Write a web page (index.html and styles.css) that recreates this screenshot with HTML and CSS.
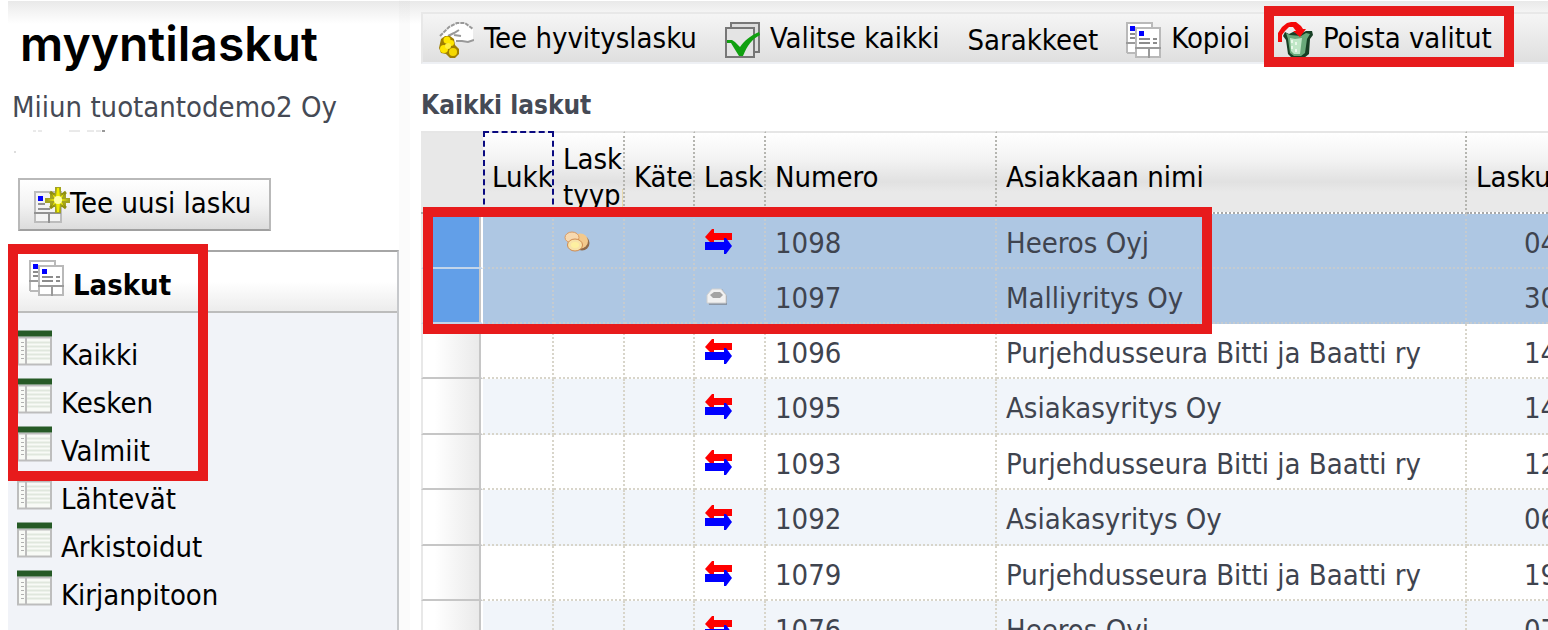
FILE: index.html
```
<!DOCTYPE html>
<html lang="fi">
<head>
  <meta charset="UTF-8">
  <meta name="viewport" content="width=device-width, initial-scale=1">
  <title>Myyntilaskut</title>
  <link rel="stylesheet" href="styles.css">
</head>
<body>

  <!-- Icon set -->
  <svg class="sprite" aria-hidden="true">
    <symbol id="i-form" viewBox="0 0 35 36">
      <path d="M1 1h25v4h-17v26H1z" fill="#fff"/>
      <path d="M1 31V1h25v4M1 31h8" fill="none" stroke="#b9b9b9" stroke-width="2"/>
      <path d="M4 12h5M4 16h5" stroke="#8c8c8c" stroke-width="2"/>
      <path d="M0 21h9" stroke="#9a9a9a" stroke-width="2"/>
      <path d="M4 4h5v5H4z" fill="#00f"/>
      <path d="M10 6h24v29H10z" fill="#fff" stroke="#b9b9b9" stroke-width="2"/>
      <path d="M9 26h26M23 26v10" stroke="#9a9a9a" stroke-width="2"/>
      <path d="M13 9h5v5h-5z" fill="#00f"/>
      <path d="M13 17h11M27 17h4M13 21h11M27 21h4" stroke="#8c8c8c" stroke-width="2"/>
    </symbol>
    <symbol id="i-new" viewBox="0 0 36 36">
      <path d="M1 5h26v30H1z" fill="#f4f4f4" stroke="#bcbcbc" stroke-width="2"/>
      <path d="M0 26h27M15 26v10" stroke="#929292" stroke-width="2"/>
      <path d="M4 9h5v5H4z" fill="#00f"/>
      <path d="M4 17h7M4 22h12" stroke="#929292" stroke-width="2"/>
      <path d="M21 0h6v6h5v5h4v5h-4v4h-5v6h-6v-6h-5v-4h-5v-5h5V6h5z" fill="#a3a320"/>
      <path d="M16 5l4 3M32 5l-4 3M16 21l4-3M32 21l-4-3" stroke="#8f8f10" stroke-width="3"/>
      <path d="M23 1h2l1 9 4-3-3 5 8 1-8 1 3 5-4-3-1 9h-2l-1-9-4 3 3-5-8-1 8-1-3-5 4 3z" fill="#f0ec00"/>
      <circle cx="24" cy="13" r="4" fill="#ffffa8"/>
    </symbol>
    <symbol id="i-list" viewBox="0 0 35 35">
      <path d="M1 7h33v27H1z" fill="#f8faf6" stroke="#bdbdbd" stroke-width="2"/>
      <path d="M10 12h23M10 16h23M10 20h23M10 24h23M10 28h23" stroke="#e0e7dd" stroke-width="2"/>
      <path d="M9 7v27" stroke="#bdbdbd" stroke-width="2"/>
      <path d="M4 12h3M4 16h3M4 20h3M4 24h3M4 28h3" stroke="#b0b0b0" stroke-width="1"/>
      <path d="M0 0h35v6H0z" fill="#265a26"/>
    </symbol>
    <symbol id="i-hand" viewBox="0 0 35 36">
      <path d="M2 14L10 5l8-4h9l7 5v12l-6 1-12 1-9-3z" fill="#fff"/>
      <path d="M1 14L10 5l8-4h8l4 3 4 3" fill="none" stroke="#999" stroke-width="2" stroke-dasharray="4 1"/>
      <path d="M9 14l6-3 5-3M15 13l7 1M17 19h6l6 1 6-2" fill="none" stroke="#999" stroke-width="2"/>
      <path d="M2 17l4-3h5l4 3 1 6 4 4v5l-4 4h-5l-4-4-5-1-2-5z" fill="#a08000"/>
      <circle cx="8" cy="18" r="3.500" fill="#ffe600"/>
      <circle cx="12" cy="21" r="3" fill="#ffe600"/>
      <circle cx="5" cy="27" r="4" fill="#ffe600"/>
      <circle cx="9" cy="24" r="3" fill="#fff040"/>
      <circle cx="14" cy="30" r="4" fill="#f5d800"/>
    </symbol>
    <symbol id="i-check" viewBox="0 0 35 36">
      <path d="M6 1h28v29H6z" fill="#ddd" stroke="#777" stroke-width="2"/>
      <path d="M1 6h28v29H1z" fill="#e4e4e4" stroke="#777" stroke-width="2"/>
      <path d="M2 18h5l3 2 5 5c5-7 10-11 19-15l1 3c-8 4-13 11-17 21h-4L9 26l-3-5H2z" fill="#10a010"/>
    </symbol>
    <symbol id="i-trash" viewBox="0 0 35 36">
      <path d="M7 10l4 2 4-2 9 1 4-2h6l1 4-3 4-1 15-5 4H14l-4-4-2-14-3-4z" fill="#173f24"/>
      <path d="M8 11l4 2 11 1 5-3 4 1-3 5-2 14-4 3h-7l-4-3-2-14z" fill="#69a97a"/>
      <path d="M12 16l5 1 7-1-2 16h-6l-3-3z" fill="#bfe6c6"/>
      <path d="M14 18v3M14 24v3M18 20v3M18 27v3" stroke="#e9f8ea" stroke-width="2"/>
      <path d="M0 20v-9l4-6 5-4 4-1h5l5 4 2 3h3l-6 8-7-6h3l-3-4h-4L7 9l-3 4v7z" fill="#f40909"/>
    </symbol>
    <symbol id="i-arrows" viewBox="0 0 28 26">
      <path d="M0 8l7-8h2v4h18v7H9v4H7z" fill="#f00"/>
      <path d="M0 13h19V9h2l6 8-6 8h-2v-4H0z" fill="#00f"/>
    </symbol>
    <symbol id="i-coins" viewBox="0 0 26 21">
      <ellipse cx="18" cy="12" rx="7.500" ry="7.500" fill="#8f6a4a"/>
      <ellipse cx="16.500" cy="10" rx="7.500" ry="7.500" fill="#f3c98c"/>
      <ellipse cx="8" cy="6.500" rx="7" ry="5.500" fill="#f7d9b0" stroke="#d99a63"/>
      <ellipse cx="11" cy="14" rx="7.500" ry="6" fill="#f8e3a8" stroke="#d08a50"/>
      <ellipse cx="11" cy="14" rx="4" ry="3" fill="#fdf0a0"/>
    </symbol>
    <symbol id="i-letter" viewBox="0 0 22 18">
      <path d="M2 8l5-6 9-1 5 7v9H3z" fill="#8b97a6"/>
      <path d="M1 7l5-6h9l5 6v8H1z" fill="#f1f1f1" stroke="#cfcfcf"/>
      <path d="M4 7l4-3h6l3 3-3 3H7z" fill="#a3a3a3"/>
    </symbol>
  </svg>

  <div class="app">

    <!-- Sidebar -->
    <aside class="sidebar">
      <h1 class="title">myyntilaskut</h1>
      <p class="company">Miiun tuotantodemo2 Oy</p>
      <svg class="remains" width="110" height="24" aria-hidden="true">
        <path d="M20 1h3M25 1h4M56 1h11M74 1h7M83 1h5" stroke="#d4d4d4"/>
        <path d="M89 1h3" stroke="#333"/>
        <path d="M1 22h2" stroke="#bbb"/>
      </svg>
      <button class="new-invoice" type="button">
        <svg class="icon"><use href="#i-new"/></svg>
        <span>Tee uusi lasku</span>
      </button>

      <nav class="menu">
        <h2 class="menu-head">
          <svg class="icon"><use href="#i-form"/></svg>
          <span>Laskut</span>
        </h2>
        <ul class="menu-list">
          <li><a href="#"><svg class="icon"><use href="#i-list"/></svg><span>Kaikki</span></a></li>
          <li><a href="#"><svg class="icon"><use href="#i-list"/></svg><span>Kesken</span></a></li>
          <li><a href="#"><svg class="icon"><use href="#i-list"/></svg><span>Valmiit</span></a></li>
          <li><a href="#"><svg class="icon"><use href="#i-list"/></svg><span>Lähtevät</span></a></li>
          <li><a href="#"><svg class="icon"><use href="#i-list"/></svg><span>Arkistoidut</span></a></li>
          <li><a href="#"><svg class="icon"><use href="#i-list"/></svg><span>Kirjanpitoon</span></a></li>
        </ul>
        <div class="marker marker-menu"></div>
      </nav>
    </aside>

    <!-- Invoices -->
    <main class="main">
      <div class="toolbar">
        <button type="button"><svg class="icon"><use href="#i-hand"/></svg>Tee hyvityslasku</button>
        <button type="button"><svg class="icon"><use href="#i-check"/></svg>Valitse kaikki</button>
        <button type="button" class="text-only">Sarakkeet</button>
        <button type="button"><svg class="icon"><use href="#i-form"/></svg>Kopioi</button>
        <button type="button"><svg class="icon"><use href="#i-trash"/></svg>Poista valitut<span class="marker marker-delete"></span></button>
      </div>

      <h2 class="heading">Kaikki laskut</h2>

      <div class="grid">
        <table class="invoices">
          <colgroup>
            <col class="c-row"><col class="c-small"><col class="c-small"><col class="c-cash"><col class="c-small"><col class="c-number"><col><col class="c-date">
          </colgroup>
          <thead>
            <tr>
              <th class="row-head"></th>
              <th class="focused"><div class="label">Lukk</div></th>
              <th><div class="label">Lask<br>tyyppi</div></th>
              <th><div class="label">Käte</div></th>
              <th><div class="label">Lask</div></th>
              <th><div class="label">Numero</div></th>
              <th><div class="label">Asiakkaan nimi</div></th>
              <th><div class="label">Lasku</div></th>
            </tr>
          </thead>
          <tbody id="rows"></tbody>
        </table>
        <div class="marker marker-rows"></div>
      </div>
    </main>
  </div>

  <script>
    const invoices = [
      { no: 1098, name: "Heeros Oyj", date: "04", type: "coins", send: "arrows", selected: true },
      { no: 1097, name: "Malliyritys Oy", date: "30", send: "letter", selected: true },
      { no: 1096, name: "Purjehdusseura Bitti ja Baatti ry", date: "14", send: "arrows" },
      { no: 1095, name: "Asiakasyritys Oy", date: "14", send: "arrows" },
      { no: 1093, name: "Purjehdusseura Bitti ja Baatti ry", date: "12", send: "arrows" },
      { no: 1092, name: "Asiakasyritys Oy", date: "06", send: "arrows" },
      { no: 1079, name: "Purjehdusseura Bitti ja Baatti ry", date: "19", send: "arrows" },
      { no: 1076, name: "Heeros Oyj", date: "07", send: "arrows" }
    ];

    function icon(name) {
      return name ? `<svg class="cell-icon ${name}"><use href="#i-${name}"/></svg>` : '';
    }

    document.getElementById('rows').innerHTML = invoices.map(r => `
      <tr class="${r.selected ? 'selected' : ''}">
        <td class="row-head"></td>
        <td></td>
        <td>${icon(r.type)}</td>
        <td></td>
        <td>${icon(r.send)}</td>
        <td>${r.no}</td>
        <td>${r.name}</td>
        <td class="date">${r.date}</td>
      </tr>`).join('');
  </script>
</body>
</html>
```
FILE: styles.css
```
* {
  box-sizing: border-box;
}

html,
body {
  height: 100%;
}

body {
  margin: 0;
  padding-left: 8px;
  overflow: hidden;
  background: #fff;
  color: #000;
  font-family: "DejaVu Sans Condensed", "Noto Sans", sans-serif;
  font-size: 29px;
  line-height: 36px;
}

.sprite {
  position: absolute;
  width: 0;
  height: 0;
}

.icon {
  flex: none;
  width: 35px;
  height: 36px;
}

button {
  font: inherit;
  color: inherit;
  cursor: pointer;
}

.app {
  display: grid;
  grid-template-columns: 391px minmax(0, 1fr);
  min-height: 100%;
  background: linear-gradient(#fff 1px, #e9e9e9 1px, #f4f4f4 12px, #fff 24px);
}

/* Red highlight frames */
.marker {
  position: absolute;
  border: 10px solid #e71b1c;
  pointer-events: none;
}

.marker-menu {
  left: 0;
  top: -8px;
  width: 200px;
  height: 237px;
}

.marker-delete {
  left: -14px;
  right: -22px;
  top: -14px;
  height: 61px;
}

.marker-rows {
  left: 2px;
  top: 76px;
  width: 789px;
  height: 127px;
}

/* Sidebar */
.sidebar {
  display: flex;
  flex-direction: column;
  align-items: flex-start;
  padding-top: 14px;
}

.title {
  margin: 0 0 0 12px;
  font: 600 48px/60px Inter, sans-serif;
}

.company {
  margin: 15px 0 5px 4px;
  color: #454a55;
}

.remains {
  margin-left: 5px;
}

.new-invoice {
  display: flex;
  margin: 24px 0 19px 10px;
  padding: 5px 18px 8px 14px;
  border: 2px solid #b9b9b9;
  border-bottom-color: #a0a0a0;
  background: linear-gradient(#fff, #f3f3f3 50%, #dcdcdc);
}

.new-invoice .icon {
  width: 36px;
  margin-top: 2px;
  margin-bottom: -2px;
}

.menu {
  position: relative;
  flex: 1;
  width: 100%;
  border-top: 2px solid #a6a6a6;
  border-right: 2px solid #c6c8cb;
  background: #f1f3f8;
}

.menu-head {
  display: flex;
  gap: 9px;
  height: 61px;
  margin: 0;
  padding: 8px 0 0 21px;
  border-bottom: 2px solid #bcbcbc;
  background: linear-gradient(#fff 50%, #ececec);
  font-size: 29px;
}

.menu-head span,
.menu-list span {
  padding-top: 7px;
}

.menu-list {
  margin: 0;
  padding: 17px 0 0 9px;
  list-style: none;
}

.menu-list a {
  display: flex;
  gap: 9px;
  height: 48px;
  color: #000;
  text-decoration: none;
}

/* Main area */
.main {
  padding: 12px 0 0 22px;
  overflow: hidden;
  background: linear-gradient(90deg, rgba(0,0,0,0.016) 11px, transparent 11px);
}

.toolbar {
  display: flex;
  gap: 28px;
  height: 52px;
  padding: 6px 16px;
  border: 2px solid #e8e8e8;
  border-right: none;
  border-bottom-color: #eef0f4;
  background: linear-gradient(#f5f5f5, #dfdfdf);
}

.toolbar button {
  position: relative;
  display: flex;
  gap: 10px;
  height: 36px;
  padding: 0;
  border: none;
  background: none;
  white-space: nowrap;
}

.toolbar .icon {
  margin-top: 2px;
}

.toolbar .text-only {
  margin-top: 2px;
}

.heading {
  margin: 23px 0 8px;
  color: #454a55;
  font-size: 26px;
}

.grid {
  position: relative;
}

/* Invoice table */
.invoices {
  width: 100%;
  table-layout: fixed;
  border-spacing: 0;
  color: #3f444f;
}

.c-row { width: 62px; }
.c-small { width: 71px; }
.c-cash { width: 70px; }
.c-number { width: 231px; }
.c-date { width: 81px; }

th {
  padding: 9px 0 0 9px;
  border-top: 2px solid #e6e6e6;
  border-right: 2px dotted #b5b5b0;
  border-bottom: 2px dotted #a8a8a8;
  background: linear-gradient(#fff, #f2f2f2 35%, #e1e1e1 62%, #e9e9e9 75%);
  color: #000;
  font-weight: normal;
  text-align: left;
}

th.row-head {
  border-right: none;
  background: #e8e8e8;
}

th.focused {
  padding-left: 7px;
  border: 2px dashed #0a0a80;
  border-bottom: 2px dotted #a8a8a8;
}

.label {
  display: flex;
  align-items: center;
  height: 70px;
  overflow: hidden;
  white-space: nowrap;
}

td {
  height: 55px;
  padding: 4px 0 0 9px;
  border-right: 2px dotted #d8d5ca;
  border-bottom: 2px dotted #d8d5ca;
  background: #fff;
  overflow: hidden;
  white-space: nowrap;
}

th:last-child,
td:last-child {
  border-right: none;
}

tr:nth-child(even) td {
  height: 56px;
  background: #f1f5fa;
}

tr.selected td,
tr.selected:nth-child(even) td {
  height: 55px;
  border-color: #c5cbd0;
  background: #aec7e3;
}

tr td.row-head,
tr:nth-child(even) td.row-head {
  border-left: 2px solid #e8e8e8;
  border-right: 2px solid #fff;
  border-bottom: 2px solid #c6c6c6;
  background: linear-gradient(90deg, #fff 20%, #e9e9e9);
  box-shadow: inset -2px 0 #c6c6c6;
}

tr.selected td.row-head,
tr.selected:nth-child(even) td.row-head {
  border-right-color: #fff;
  border-bottom-color: #c3d5ea;
  background: #629fe8;
}

td.date {
  padding-left: 57px;
}

.cell-icon {
  display: block;
  width: 28px;
  height: 26px;
  margin: 0 0 2px 1px;
}

.coins {
  width: 26px;
  height: 21px;
}

.letter {
  width: 22px;
  height: 18px;
  margin-left: 2px;
}
```
